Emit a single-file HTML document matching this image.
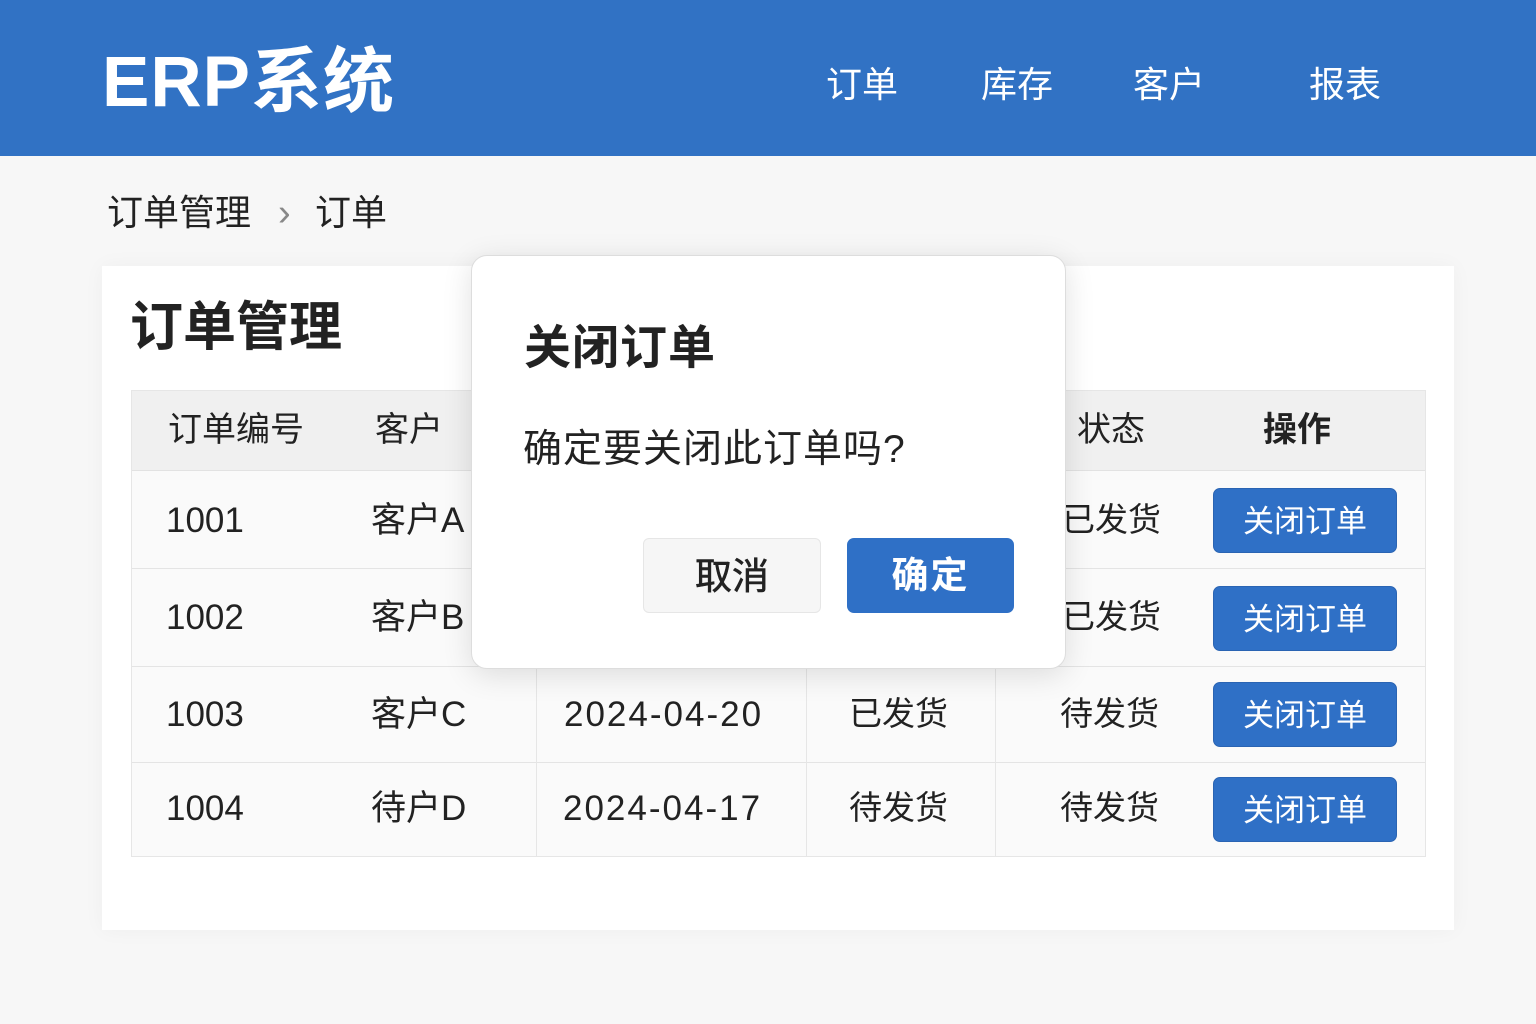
<!DOCTYPE html>
<html><head><meta charset="utf-8"><style>
*{margin:0;padding:0;box-sizing:border-box}
body{width:1536px;height:1024px;overflow:hidden;background:#f7f7f7;font-family:"Liberation Sans","Noto Sans CJK SC",sans-serif;color:#222;position:relative}
.t{position:absolute;line-height:1;white-space:nowrap}
.hdr{position:absolute;left:0;top:0;width:1536px;height:156px;background:#3172c4}
.card{position:absolute;left:102px;top:266px;width:1352px;height:664px;background:#fff;box-shadow:0 0 20px rgba(0,0,0,.04)}
.tbl{position:absolute;left:131px;top:390px;width:1295px;height:467px;border:1px solid #e6e6e6;background:#fafafa}
.th{position:absolute;left:0;top:0;width:100%;height:80px;background:#f0f0f0;border-bottom:1px solid #e2e2e2}
.rl{position:absolute;left:0;width:100%;height:1px;background:#e4e4e4}
.vl{position:absolute;width:1px;background:#e6e6e6}
.btn{position:absolute;left:1213px;width:184px;height:65px;background:#2f70c6;border-radius:7px;color:#fff;font-size:31px;text-align:center;line-height:65px;border:1px solid #2a64b3}
.modal{position:absolute;left:471px;top:255px;width:595px;height:414px;background:#fff;border:1px solid #ddd;border-radius:16px;box-shadow:0 6px 30px rgba(0,0,0,.12)}
.d{letter-spacing:2px}
</style></head><body>
<div class="hdr"></div>
<div class="t" style="left:102px;top:47px;font-size:71px;font-weight:bold;color:#fff;letter-spacing:1px">ERP系统</div>
<div class="t" style="left:826px;top:67px;font-size:36px;color:#fff">订单</div>
<div class="t" style="left:981px;top:67px;font-size:36px;color:#fff">库存</div>
<div class="t" style="left:1133px;top:67px;font-size:36px;color:#fff">客户</div>
<div class="t" style="left:1309px;top:67px;font-size:36px;color:#fff">报表</div>

<div class="t" style="left:107px;top:195px;font-size:36px">订单管理</div>
<div class="t" style="left:278px;top:194px;font-size:38px;color:#888">›</div>
<div class="t" style="left:315px;top:195px;font-size:36px">订单</div>

<div class="card"></div>
<div class="t" style="left:130px;top:301px;font-size:53px;font-weight:bold">订单管理</div>

<div class="tbl">
<div class="th"></div>
<div class="rl" style="top:177px"></div>
<div class="rl" style="top:275px"></div>
<div class="rl" style="top:371px"></div>
<div class="vl" style="left:404px;top:276px;height:190px"></div>
<div class="vl" style="left:674px;top:276px;height:190px"></div>
<div class="vl" style="left:863px;top:276px;height:190px"></div>
</div>
<div class="t" style="left:168px;top:413px;font-size:34px">订单编号</div>
<div class="t" style="left:375px;top:413px;font-size:34px">客户</div>
<div class="t" style="left:1077px;top:413px;font-size:34px">状态</div>
<div class="t" style="left:1263px;top:413px;font-size:34px;font-weight:bold">操作</div>

<div class="t" style="left:166px;top:503px;font-size:35px">1001</div>
<div class="t" style="left:371px;top:503px;font-size:35px">客户A</div>
<div class="t" style="left:1062px;top:503px;font-size:33px">已发货</div>
<div class="btn" style="top:488px">关闭订单</div>

<div class="t" style="left:166px;top:600px;font-size:35px">1002</div>
<div class="t" style="left:371px;top:600px;font-size:35px">客户B</div>
<div class="t" style="left:1062px;top:600px;font-size:33px">已发货</div>
<div class="btn" style="top:586px">关闭订单</div>

<div class="t" style="left:166px;top:697px;font-size:35px">1003</div>
<div class="t" style="left:371px;top:697px;font-size:35px">客户C</div>
<div class="t d" style="left:564px;top:697px;font-size:35px">2024-04-20</div>
<div class="t" style="left:849px;top:697px;font-size:33px">已发货</div>
<div class="t" style="left:1060px;top:697px;font-size:33px">待发货</div>
<div class="btn" style="top:682px">关闭订单</div>

<div class="t" style="left:166px;top:791px;font-size:35px">1004</div>
<div class="t" style="left:371px;top:791px;font-size:35px">待户D</div>
<div class="t d" style="left:563px;top:791px;font-size:35px">2024-04-17</div>
<div class="t" style="left:849px;top:791px;font-size:33px">待发货</div>
<div class="t" style="left:1060px;top:791px;font-size:33px">待发货</div>
<div class="btn" style="top:777px">关闭订单</div>

<div class="modal"></div>
<div class="t" style="left:524px;top:324px;font-size:47px;font-weight:bold;letter-spacing:1px">关闭订单</div>
<div class="t" style="left:523px;top:430px;font-size:39px;letter-spacing:1px">确定要关闭此订单吗?</div>
<div style="position:absolute;left:643px;top:538px;width:178px;height:75px;background:#f6f6f6;border:1px solid #e6e6e6;border-radius:6px;font-size:37px;text-align:center;line-height:75px;-webkit-text-stroke:0.6px #222">取消</div>
<div style="position:absolute;left:847px;top:538px;width:167px;height:75px;background:#2f70c6;border-radius:7px;color:#fff;font-size:37px;font-weight:bold;text-align:center;line-height:75px;letter-spacing:2px">确定</div>
</body></html>
